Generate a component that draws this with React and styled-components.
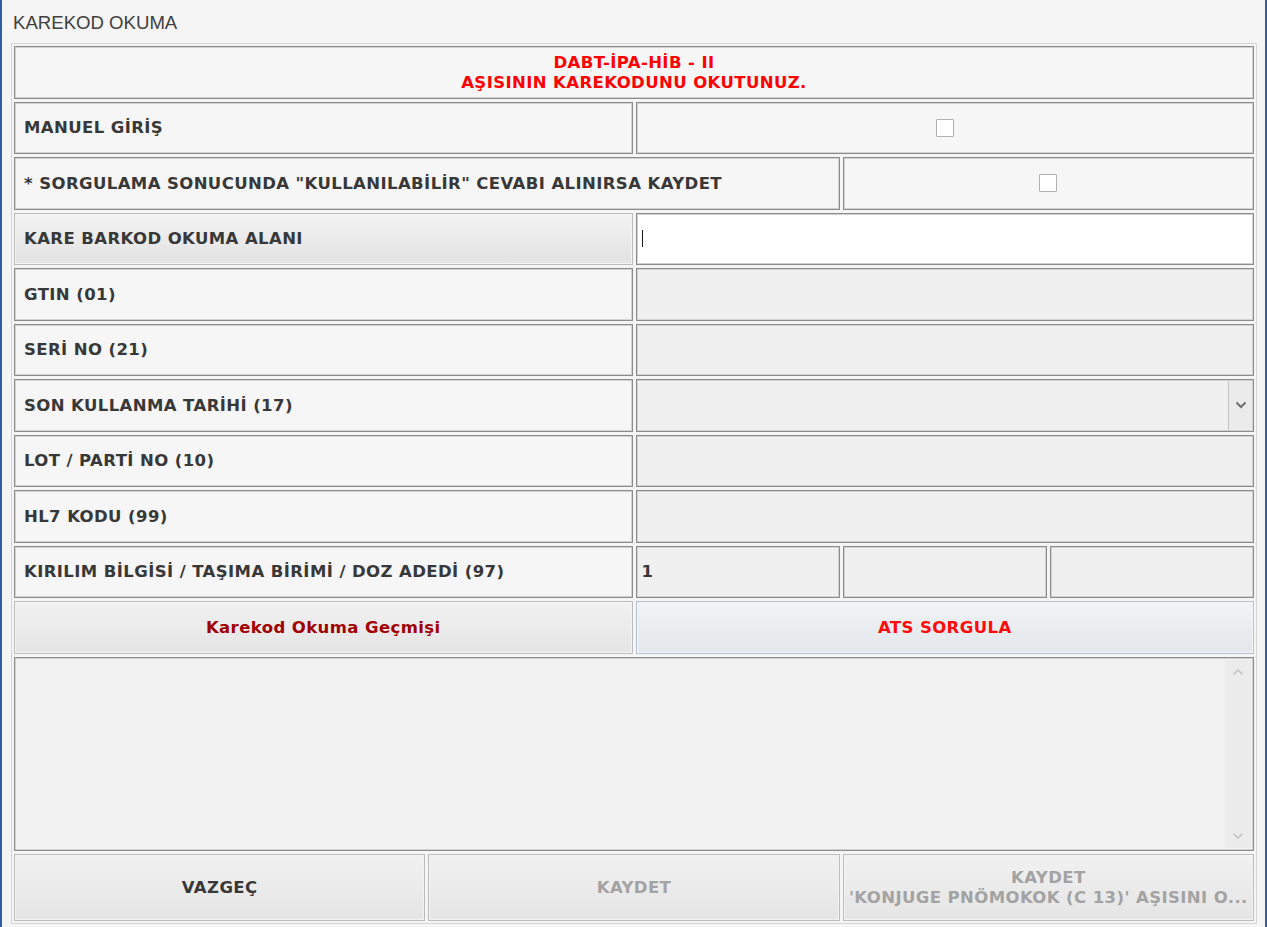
import React from 'react'
import styled, { createGlobalStyle } from 'styled-components'

const GlobalStyle = createGlobalStyle`
  html, body {
    margin: 0;
    padding: 0;
    background: #f5f5f5;
  }
  * {
    box-sizing: border-box;
  }
`

const ROWS = [
  { label: 'GTIN (01)' },
  { label: 'SERİ NO (21)' },
  { label: 'SON KULLANMA TARİHİ (17)', combo: true },
  { label: 'LOT / PARTİ NO (10)' },
  { label: 'HL7 KODU (99)' },
]

export default function App() {
  return (
    <>
      <GlobalStyle />
      <Window>
        <Title>KAREKOD OKUMA</Title>
        <Panel>
          <Grid>
            <Cell span={6} center>
              <Heading>
                DABT-İPA-HİB - II
                <br />
                AŞISININ KAREKODUNU OKUTUNUZ.
              </Heading>
            </Cell>

            <Cell span={3}>MANUEL GİRİŞ</Cell>
            <Cell span={3} center>
              <Check />
            </Cell>

            <Cell span={4}>
              * SORGULAMA SONUCUNDA "KULLANILABİLİR" CEVABI ALINIRSA KAYDET
            </Cell>
            <Cell span={2} center>
              <Check />
            </Cell>

            <LabelButton span={3}>KARE BARKOD OKUMA ALANI</LabelButton>
            <Input span={3}>
              <Caret />
            </Input>

            {ROWS.map(({ label, combo }) => (
              <React.Fragment key={label}>
                <Cell span={3}>{label}</Cell>
                <Value span={3}>
                  {combo && (
                    <DropButton>
                      <svg width="12" height="8" viewBox="0 0 12 8">
                        <path
                          d="M1.5 1.5 L6 6 L10.5 1.5"
                          fill="none"
                          stroke="#6e6e6e"
                          strokeWidth="2"
                        />
                      </svg>
                    </DropButton>
                  )}
                </Value>
              </React.Fragment>
            ))}

            <Cell span={3}>KIRILIM BİLGİSİ / TAŞIMA BİRİMİ / DOZ ADEDİ (97)</Cell>
            <Value span={1}>1</Value>
            <Value span={1} />
            <Value span={1} />

            <Button span={3} tone="darkred">
              Karekod Okuma Geçmişi
            </Button>
            <Button span={3} tone="red" blue>
              ATS SORGULA
            </Button>

            <Memo>
              <Scroll>
                <svg width="12" height="8" viewBox="0 0 12 8">
                  <path d="M1.5 6.5 L6 2 L10.5 6.5" fill="none" stroke="#c4c4c4" strokeWidth="1.6" />
                </svg>
                <svg width="12" height="8" viewBox="0 0 12 8">
                  <path d="M1.5 1.5 L6 6 L10.5 1.5" fill="none" stroke="#c4c4c4" strokeWidth="1.6" />
                </svg>
              </Scroll>
            </Memo>

            <Button span={2}>VAZGEÇ</Button>
            <Button span={2} tone="disabled">
              KAYDET
            </Button>
            <Button span={2} tone="disabled">
              KAYDET
              <br />
              'KONJUGE PNÖMOKOK (C 13)' AŞISINI O...
            </Button>
          </Grid>
        </Panel>
      </Window>
    </>
  )
}

const Window = styled.div`
  width: 1267px;
  height: 927px;
  display: flex;
  flex-direction: column;
  background: #f5f5f5;
  border-left: 2px solid #2f5f9e;
  border-right: 2px solid #2f5f9e;
  font-family: 'DejaVu Sans', Verdana, sans-serif;
  color: #383838;
`

const Title = styled.div`
  height: 43px;
  padding: 12px 0 0 11px;
  font-family: 'Liberation Sans', Arial, sans-serif;
  font-size: 18.6px;
  color: #404040;
`

const Panel = styled.div`
  margin: 0 8px 0 9px;
  padding: 2px;
  border: 1px solid #d6d6d6;
`

const Grid = styled.div`
  display: grid;
  grid-template-columns: repeat(6, 1fr);
  grid-template-rows: repeat(11, 52.5px) 194px 67px;
  gap: 3px;
`

const Cell = styled.div`
  grid-column: span ${(p) => p.span};
  display: flex;
  align-items: center;
  justify-content: ${(p) => (p.center ? 'center' : 'flex-start')};
  padding: 0 9px;
  background: #f6f6f6;
  border: 1px solid #8c8c8c;
  box-shadow: inset 0 0 0 1px #d2d2d2;
  font-size: 16.5px;
  letter-spacing: 0.4px;
  font-weight: bold;
  white-space: nowrap;
`

const Heading = styled.div`
  text-align: center;
  color: #ff0000;
  font-size: 16.5px;
  line-height: 20px;
  padding-top: 2px;
`

const Value = styled(Cell)`
  background: #f0f0f0;
  padding: 0 0 0 5px;
  justify-content: flex-start;
  position: relative;
`

const DropButton = styled.div`
  position: absolute;
  top: 1px;
  right: 1px;
  bottom: 1px;
  width: 24px;
  display: flex;
  align-items: center;
  justify-content: center;
  border-left: 1px solid #c4c4c4;
  background: #ebebeb;
`

const Input = styled.div`
  grid-column: span ${(p) => p.span};
  display: flex;
  align-items: center;
  padding-left: 5px;
  background: #ffffff;
  border: 1px solid #8c8c8c;
  box-shadow: inset 0 0 0 1px #d2d2d2;
`

const Caret = styled.div`
  width: 1.5px;
  height: 17px;
  background: #1a1a1a;
`

const Check = styled.div`
  width: 18px;
  height: 18px;
  background: #ffffff;
  border: 1px solid #b0b0b0;
  border-radius: 1px;
`

const LabelButton = styled(Cell)`
  background: linear-gradient(#f3f3f3, #e2e2e2);
  border: 1px solid #bcbcbc;
  box-shadow: inset 0 0 0 1px #f4f4f4;
`

const TONES = {
  dark: '#383838',
  darkred: '#a00000',
  red: '#ff0a0a',
  disabled: '#a3a3a3',
}

const Button = styled.div`
  grid-column: span ${(p) => p.span};
  display: flex;
  align-items: center;
  justify-content: center;
  text-align: center;
  line-height: 20px;
  padding-top: 2px;
  background: ${(p) =>
    p.blue
      ? 'linear-gradient(#f1f3f5, #e3e7eb)'
      : 'linear-gradient(#f1f1f1, #e5e5e5)'};
  border: 1px solid ${(p) => (p.blue ? '#b2c0cf' : '#bdbdbd')};
  box-shadow: inset 0 0 0 1px ${(p) => (p.blue ? '#f4f6f8' : '#f3f3f3')};
  color: ${(p) => TONES[p.tone || 'dark']};
  font-size: 16.5px;
  letter-spacing: 0.4px;
  font-weight: bold;
  white-space: nowrap;
`

const Memo = styled.div`
  grid-column: span 6;
  display: flex;
  justify-content: flex-end;
  padding: 2px 2px 2px 0;
  background: #f2f2f2;
  border: 1px solid #8c8c8c;
  box-shadow: inset 0 0 0 1px #d2d2d2;
`

const Scroll = styled.div`
  width: 26px;
  display: flex;
  flex-direction: column;
  justify-content: space-between;
  align-items: center;
  padding: 8px 0;
  background: #ececec;
`
